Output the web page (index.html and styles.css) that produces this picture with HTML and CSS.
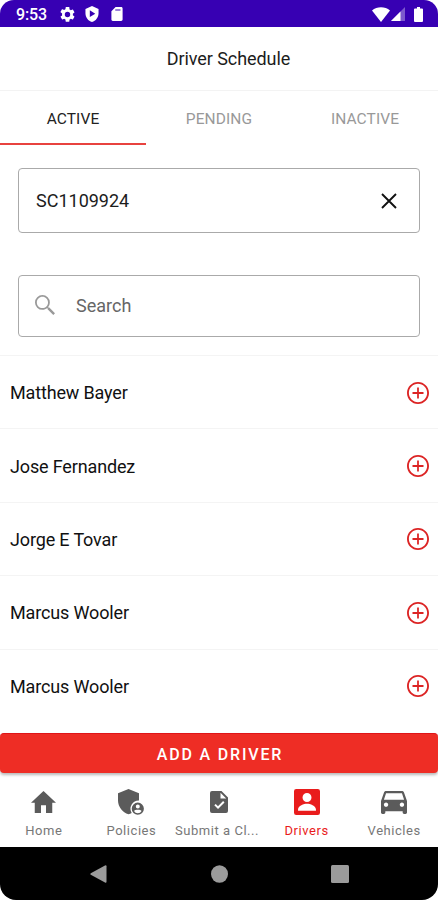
FILE: index.html
```html
<!DOCTYPE html>
<html lang="en">
<head>
<meta charset="utf-8">
<title>Driver Schedule</title>
<link rel="stylesheet" href="styles.css">
</head>
<body>
<svg class="defs" width="0" height="0">
  <symbol id="plus" viewBox="2 2 20 20"><path d="M12.800 7h-1.600v4.200H7v1.600h4.200V17h1.600v-4.200H17v-1.600h-4.200V7zM12 2C6.480 2 2 6.480 2 12s4.480 10 10 10 10-4.480 10-10S17.520 2 12 2zm0 18.300c-4.580 0-8.300-3.720-8.300-8.300S7.420 3.700 12 3.700s8.300 3.720 8.300 8.300-3.720 8.300-8.300 8.300z"/></symbol>
</svg>
<div class="phone">
  <header class="status">
    <span class="time">9:53</span>
    <svg class="gear" viewBox="2 2 20 20"><path fill-rule="evenodd" d="M19.140 12.940c.04-.3.060-.61.060-.94s-.02-.64-.07-.94l2.030-1.580a.49.49 0 0 0 .12-.61l-1.920-3.320a.49.49 0 0 0-.59-.22l-2.390.96a7 7 0 0 0-1.620-.94l-.36-2.540A.48.48 0 0 0 13.920 2h-3.840a.48.48 0 0 0-.48.410L9.240 4.950a7 7 0 0 0-1.620.94l-2.390-.96a.48.48 0 0 0-.59.220L2.720 8.470a.48.48 0 0 0 .12.610l2.030 1.580a7 7 0 0 0 0 2.680l-2.030 1.180a.49.49 0 0 0-.12.610l1.920 3.320c.12.220.370.290.59.220l2.390-.96c.5.380 1.030.7 1.620.94l.36 2.540c.05.240.240.410.480.410h3.840c.240 0 .440-.17.470-.41l.36-2.540a7 7 0 0 0 1.620-.94l2.390.96c.220.080.470 0 .59-.22l1.920-3.320a.49.49 0 0 0-.12-.61zM12 15.600a3.600 3.600 0 1 1 0-7.200 3.600 3.600 0 0 1 0 7.200z"/></svg>
    <svg class="guard" viewBox="3 1 18 22"><path fill-rule="evenodd" d="M12 1 3 5v6c0 5.550 3.840 10.740 9 12 5.160-1.260 9-6.450 9-12V5zM9 6.800 16.500 11.500 9 16.200z"/></svg>
    <svg class="sd" viewBox="4 2 16 20"><path fill-rule="evenodd" d="M18 2h-8L4 8v12c0 1.100.9 2 2 2h12c1.100 0 2-.9 2-2V4c0-1.100-.9-2-2-2zM9.500 5.500h7.500v1.600H9.500z"/></svg>
    <span class="grow"></span>
    <svg class="wifi" viewBox="0 0 18 15"><path d="M9 15 0 3.500C5-.8 13-.8 18 3.500z"/></svg>
    <svg class="signal" viewBox="0 0 14 14"><path opacity=".35" d="M14 0v14H0z"/><path d="M9.500 4.500V14H0z"/></svg>
    <svg class="battery" viewBox="0 0 9 15"><path d="M3 0h3v1.500h2q1 0 1 1V14q0 1-1 1H1q-1 0-1-1V2.500q0-1 1-1h2z"/></svg>
  </header>
  <h1 class="title"><span>Driver Schedule</span></h1>
  <nav class="tabs">
    <span class="tab on">ACTIVE</span><span class="tab">PENDING</span><span class="tab">INACTIVE</span>
  </nav>
  <div class="field policy">
    <span class="policy-no">SC1109924</span>
    <svg class="clear" viewBox="0 0 16 16"><path d="M1 1 15 15M15 1 1 15"/></svg>
  </div>
  <div class="field search">
    <svg class="lens" viewBox="3 3 17.500 17.500"><path d="M15.500 14h-.79l-.28-.27A6.470 6.470 0 0 0 16 9.500 6.500 6.500 0 1 0 9.500 16c1.610 0 3.090-.59 4.230-1.570l.27.28v.79l5 4.990L20.490 19zm-6 .4C6.800 14.400 4.600 12.200 4.600 9.500S6.800 4.600 9.500 4.600s4.900 2.200 4.900 4.900-2.200 4.900-4.900 4.900z"/></svg>
    <span class="hint">Search</span>
  </div>
  <ul class="drivers">
    <li><span class="name">Matthew Bayer</span><svg class="add"><use href="#plus"/></svg></li>
    <li><span class="name">Jose Fernandez</span><svg class="add"><use href="#plus"/></svg></li>
    <li><span class="name">Jorge E Tovar</span><svg class="add"><use href="#plus"/></svg></li>
    <li><span class="name">Marcus Wooler</span><svg class="add"><use href="#plus"/></svg></li>
    <li><span class="name">Marcus Wooler</span><svg class="add"><use href="#plus"/></svg></li>
  </ul>
  <button class="add-driver"><span>ADD A DRIVER</span></button>
  <nav class="bottom">
    <div class="item"><span class="icon"><svg width="25" height="22" viewBox="2 3 20 17" preserveAspectRatio="none"><path d="M10 20v-6h4v6h5v-8h3L12 3 2 12h3v8z"/></svg></span><span class="label">Home</span></div>
    <div class="item"><span class="icon"><svg width="26" height="26" viewBox="0 0 26 26"><path d="M10.500 0 21 4.200v7.200a8.300 8.300 0 0 0-7.300 12.500q-1.500 1-3.200 1.400C4.500 23.500 0 17.500 0 11.500V4.200z"/><path fill-rule="evenodd" d="M19.800 13.600a6.100 6.100 0 1 0 0 12.200 6.100 6.100 0 0 0 0-12.200zm0 1.900a2 2 0 1 1 0 4 2 2 0 0 1 0-4zm0 8.700a4.300 4.300 0 0 1-3.800-2.200c.8-1.600 6.800-1.600 7.600 0a4.300 4.300 0 0 1-3.800 2.200z"/></svg></span><span class="label">Policies</span></div>
    <div class="item"><span class="icon"><svg width="18" height="22" viewBox="0 0 18 22"><path fill-rule="evenodd" d="M2 0h9.500L18 6.500V20q0 2-2 2H2q-2 0-2-2V2q0-2 2-2zm8.500 1.800v5.700h5.700zM8 18l6.500-6.500-1.400-1.400L8 15.200l-2.300-2.300-1.400 1.400z"/></svg></span><span class="label claim">Submit a Cl...</span></div>
    <div class="item current"><span class="icon"><svg width="26" height="26" viewBox="3 3 18 18"><path fill-rule="evenodd" d="M4.500 3h15Q21 3 21 4.500v15q0 1.500-1.500 1.500h-15Q3 21 3 19.500v-15Q3 3 4.500 3zM12 5.800a3.100 3.100 0 1 0 0 6.200 3.100 3.100 0 0 0 0-6.200zM18.200 18v-.8c0-2.600-4.100-4-6.200-4s-6.200 1.400-6.200 4v.8z"/></svg></span><span class="label">Drivers</span></div>
    <div class="item"><span class="icon"><svg width="26" height="23" viewBox="3 5 18 16" preserveAspectRatio="none"><path d="M18.920 6.010C18.720 5.420 18.160 5 17.500 5h-11c-.66 0-1.210.42-1.420 1.010L3 12v8c0 .55.450 1 1 1h1c.55 0 1-.45 1-1v-1h12v1c0 .55.450 1 1 1h1c.55 0 1-.45 1-1v-8zM6.500 16c-.83 0-1.500-.67-1.500-1.500S5.670 13 6.500 13s1.500.67 1.500 1.500S7.330 16 6.500 16zm11 0c-.83 0-1.500-.67-1.500-1.500s.67-1.500 1.500-1.500 1.500.67 1.500 1.500-.67 1.500-1.500 1.500zM5 11l1.500-4.500h11L19 11z"/></svg></span><span class="label">Vehicles</span></div>
  </nav>
  <footer class="system">
    <svg width="17" height="18" viewBox="0 0 17 18"><path d="M15 .4q1.500-.7 1.500.8v15.600q0 1.500-1.500.8L.8 9.800q-1-.8 0-1.600z"/></svg>
    <svg width="17" height="18" viewBox="0 0 17 18"><ellipse cx="8.500" cy="9" rx="8.500" ry="8.800"/></svg>
    <svg width="18" height="18" viewBox="0 0 18 18"><rect width="18" height="18" rx="1.500"/></svg>
  </footer>
</div>
</body>
</html>
```
FILE: styles.css
```css
* { box-sizing: border-box; }
body { margin: 0; background: #fff; font-family: Roboto, "Liberation Sans", sans-serif; color: #1c1c1c; }
svg { display: block; fill: currentColor; flex: none; }
.defs { position: absolute; }
.phone { width: 438px; height: 900px; display: flex; flex-direction: column; overflow: hidden; background: #fff; }
.phone > * { flex: none; }
.status { height: 27px; background: #3700b3; color: #fff; border-radius: 14px 14px 0 0; display: flex; align-items: center; padding: 1px 15px 0 16px; }
.time { width: 44px; font-size: 16px; font-weight: 500; letter-spacing: -.1px; }
.gear { width: 15px; height: 15px; }
.guard { width: 14px; height: 16px; margin-left: 10px; }
.sd { width: 12px; height: 14px; margin-left: 12px; }
.grow { flex: 1; }
.wifi { width: 18px; height: 15px; }
.signal { width: 14px; height: 14px; margin-left: 1px; }
.battery { width: 9px; height: 15px; margin-left: 9px; }
.title { margin: 0; height: 64px; border-bottom: 1px solid #f3f3f3; display: flex; align-items: center; justify-content: center; padding-left: 19px; font-size: 18px; font-weight: 400; letter-spacing: -.07px; }
.tabs { height: 54px; display: grid; grid-template-columns: repeat(3, 1fr); }
.tab { display: flex; align-items: center; justify-content: center; padding-top: 3px; border-bottom: 2px solid transparent; font-size: 15.500px; letter-spacing: .1px; color: #999; }
.tab.on { color: #222; border-color: #e8423f; }
.field { margin: 23px 18px 0; border: 1px solid #aaa; border-radius: 4px; display: flex; align-items: center; }
.policy { height: 65px; padding: 0 22px 0 17px; justify-content: space-between; font-size: 18px; }
.clear { width: 16px; height: 16px; fill: none; stroke: #111; stroke-width: 1.900; }
.search { margin-top: 42px; height: 62px; padding: 0 0 2px 16px; }
.lens { width: 20px; height: 20px; color: #999; }
.hint { margin-left: 21px; font-size: 18px; color: #666; }
.drivers { list-style: none; margin: 18px 0 0; padding: 0; height: 378px; }
.drivers li { height: 73.400px; border-top: 1px solid #f4f4f4; display: flex; align-items: center; justify-content: space-between; padding: 1px 9px 0 10px; font-size: 18px; letter-spacing: -.15px; color: #111; }
.add { width: 22px; height: 22px; color: #dc2424; }
.add-driver { height: 40px; border: 0; border-top: 1px solid #df1518; border-radius: 4px; background: #ee2d25; color: #fff; font: 500 16px Roboto, sans-serif; letter-spacing: 1.820px; box-shadow: 0 2px 3px rgba(0,0,0,.28); padding: 1px 0 0 2px; }
.bottom { height: 74px; display: grid; grid-template-columns: repeat(5, 87.600px); padding-top: 15px; color: #5b5b5b; }
.item { display: flex; flex-direction: column; align-items: center; }
.icon { height: 28px; display: flex; align-items: center; }
.label { margin-top: 7px; font-size: 13px; line-height: 16px; letter-spacing: .55px; color: #777; white-space: nowrap; }
.claim { margin-left: -4px; }
.current, .current .label { color: #e91c1c; }
.system { height: 53px; background: #000; color: #9b9b9b; border-radius: 0 0 16px 16px; display: flex; align-items: center; justify-content: space-between; padding: 0 89px 0 90px; }
```
